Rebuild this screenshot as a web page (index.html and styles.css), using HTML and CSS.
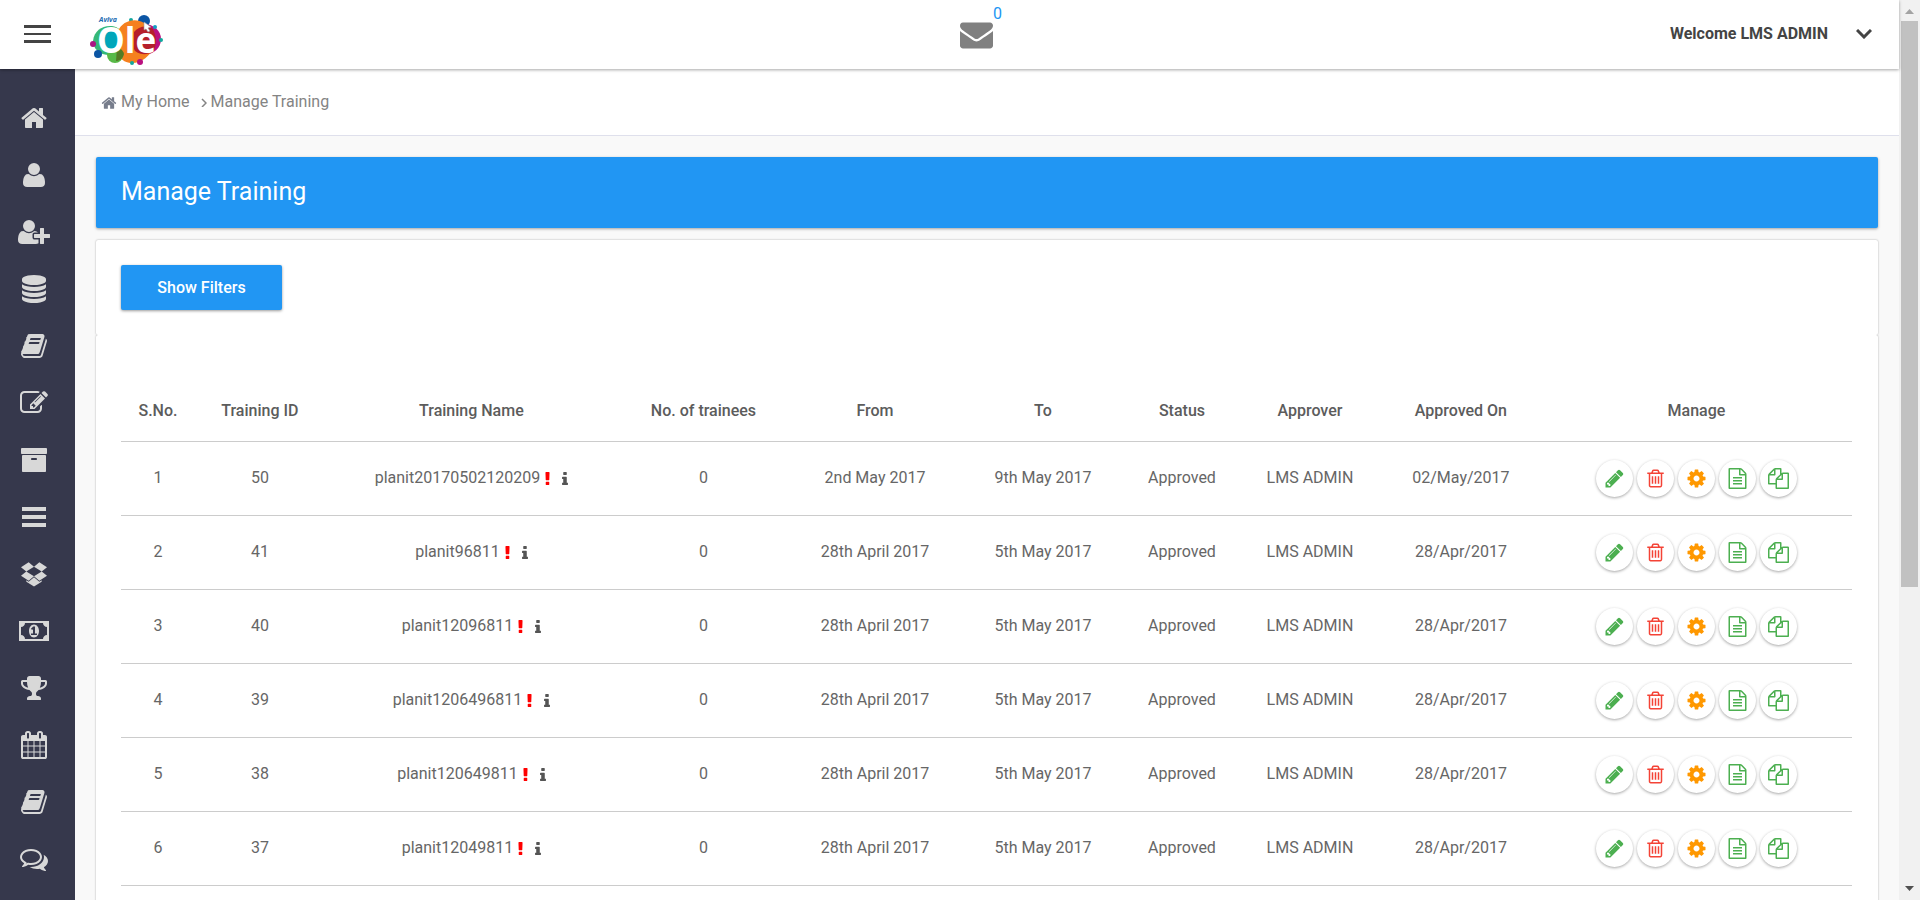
FILE: index.html
```html
<!DOCTYPE html>
<html lang="en">
<head>
<meta charset="utf-8">
<title>Manage Training</title>
<link rel="stylesheet" href="styles.css">
</head>
<body>
<svg class="sprite" aria-hidden="true">
  <symbol id="home" viewBox="0 0 1792 1792"><path d="M1472 992v480q0 26-19 45t-45 19h-384v-384h-256v384h-384q-26 0-45-19t-19-45v-480q0-1 .5-3t.5-3l575-474 575 474q1 2 1 6zm223-69l-62 74q-8 9-21 11h-3q-13 0-21-7l-692-577-692 577q-12 8-24 7-13-2-21-11l-62-74q-8-10-7-23.500t11-21.500l719-599q32-26 76-26t76 26l244 204v-195q0-14 9-23t23-9h192q14 0 23 9t9 23v408l219 182q10 8 11 21.500t-7 23.500z"/></symbol>
  <symbol id="user" viewBox="0 0 1792 1792"><path d="M1600 1405q0 120-73 189.500t-194 69.500h-874q-121 0-194-69.500t-73-189.500q0-53 3.500-103.500t14-109 26.500-108.500 43-97.500 62-81 85.500-53.500 111.500-20q9 0 42 21.500t74.500 48 108 48 133.500 21.500 133.500-21.500 108-48 74.500-48 42-21.500q61 0 111.500 20t85.500 53.500 62 81 43 97.500 26.500 108.500 14 109 3.500 103.500zm-320-893q0 159-112.500 271.500t-271.500 112.500-271.500-112.500-112.500-271.500 112.500-271.500 271.500-112.500 271.500 112.500 112.500 271.500z"/></symbol>
  <symbol id="user-plus" viewBox="0 0 2048 1792"><path d="M704 896q-159 0-271.500-112.500t-112.500-271.500 112.500-271.500 271.500-112.500 271.500 112.500 112.500 271.500-112.500 271.500-271.500 112.500zm960 128h352q13 0 22.500 9.500t9.500 22.500v192q0 13-9.500 22.500t-22.500 9.500h-352v352q0 13-9.500 22.500t-22.500 9.500h-192q-13 0-22.500-9.500t-9.500-22.500v-352h-352q-13 0-22.500-9.500t-9.500-22.500v-192q0-13 9.500-22.500t22.500-9.500h352v-352q0-13 9.500-22.500t22.500-9.500h192q13 0 22.500 9.500t9.500 22.500v352zm-736 224q0 52 38 90t90 38h256v238q-68 50-171 50h-874q-121 0-194-69t-73-190q0-53 3.500-103.500t14-109 26.500-108.500 43-97.500 62-81 85.500-53.500 111.500-20q19 0 39 17 79 61 154.500 91.500t164.500 30.500 164.500-30.500 154.500-91.500q20-17 39-17 132 0 217 96h-223q-52 0-90 38t-38 90v192z"/></symbol>
  <symbol id="database" viewBox="0 0 1792 1792"><path d="M896 768q237 0 443-43t325-127v170q0 69-103 128t-280 93.500-385 34.500-385-34.500-280-93.500-103-128v-170q119 84 325 127t443 43zm0 768q237 0 443-43t325-127v170q0 69-103 128t-280 93.500-385 34.500-385-34.500-280-93.500-103-128v-170q119 84 325 127t443 43zm0-384q237 0 443-43t325-127v170q0 69-103 128t-280 93.500-385 34.500-385-34.500-280-93.500-103-128v-170q119 84 325 127t443 43zm0-1152q208 0 385 34.500t280 93.500 103 128v128q0 69-103 128t-280 93.500-385 34.500-385-34.500-280-93.500-103-128v-128q0-69 103-128t280-93.500 385-34.500z"/></symbol>
  <symbol id="book" viewBox="0 0 1792 1792"><path d="M1703 478q40 57 18 129l-275 906q-19 64-76.500 107.500t-122.500 43.500h-923q-77 0-148.500-53.500t-99.500-131.500q-24-67-2-127 0-4 3-27t4-37q1-8-3-21.500t-3-19.500q2-11 8-21t16.500-23.500 16.500-23.500q23-38 45-91.500t30-91.500q3-10 .5-30t-.5-28q3-11 17-28t17-23q21-36 42-92t25-90q1-9-2.500-32t.5-28q4-13 22-30.500t22-22.500q19-26 42.500-84.500t27.500-96.500q1-8-3-25.500t-2-26.500q2-8 9-18t18-23 17-21q8-12 16.500-30.500t15-35 16-36 19.500-32 26.500-23.500 36-11.500 47.500 5.500l-1 3q38-9 51-9h761q74 0 114 56t18 130l-274 906q-36 119-71.500 153.500t-128.500 34.500h-869q-27 0-38 15-11 16-1 43 24 70 144 70h923q29 0 56-15.500t35-41.500l300-987q7-22 5-57 38 15 59 43zm-1064 2q-4 13 2 22.500t20 9.500h608q13 0 25.500-9.500t16.500-22.500l21-64q4-13-2-22.500t-20-9.500h-608q-13 0-25.500 9.500t-16.500 22.500zm-83 256q-4 13 2 22.500t20 9.500h608q13 0 25.500-9.500t16.500-22.500l21-64q4-13-2-22.500t-20-9.500h-608q-13 0-25.500 9.500t-16.500 22.500z"/></symbol>
  <symbol id="edit" viewBox="0 0 1792 1792"><path d="M888 1184l116-116-152-152-116 116v56h96v96h56zm440-720q-16-16-33 1l-350 350q-17 17-1 33t33-1l350-350q17-17 1-33zm80 594v190q0 119-84.500 203.500t-203.500 84.500h-832q-119 0-203.500-84.500t-84.500-203.500v-832q0-119 84.500-203.500t203.500-84.500h832q63 0 117 25 15 7 18 23 3 17-9 29l-49 49q-14 14-32 8-23-6-45-6h-832q-66 0-113 47t-47 113v832q0 66 47 113t113 47h832q66 0 113-47t47-113v-126q0-13 9-22l64-64q15-15 35-7t20 29zm-96-738l288 288-672 672h-288v-288zm444 132l-92 92-288-288 92-92q28-28 68-28t68 28l152 152q28 28 28 68t-28 68z"/></symbol>
  <symbol id="archive" viewBox="0 0 1792 1792"><path d="M1088 832q0-26-19-45t-45-19h-256q-26 0-45 19t-19 45 19 45 45 19h256q26 0 45-19t19-45zm576-192v960q0 26-19 45t-45 19h-1408q-26 0-45-19t-19-45v-960q0-26 19-45t45-19h1408q26 0 45 19t19 45zm64-448v256q0 26-19 45t-45 19h-1536q-26 0-45-19t-19-45v-256q0-26 19-45t45-19h1536q26 0 45 19t19 45z"/></symbol>
  <symbol id="bars" viewBox="0 0 1792 1792"><path d="M128 256h1536v256H128zM128 768h1536v256H128zM128 1280h1536v256H128z"/></symbol>
  <symbol id="dropbox" viewBox="0 0 1792 1792"><path d="M402 733l494 305-342 285-490-319zM1390 733l338 271-490 319-342-285zM554 143l342 285-494 305-338-270zM1238 143l490 320-338 270-494-305zM896 1100l343 284 147-96v108l-490 293-490-293v-108l147 96z"/></symbol>
  <symbol id="money" viewBox="0 0 1920 1792"><path fill-rule="evenodd" d="M0 256h1920v1280H0zM384 384q0 106-75 181t-181 75v512q106 0 181 75t75 181h1152q0-106 75-181t181-75V640q-106 0-181-75t-75-181zM960 480c180 0 320 186 320 416s-140 416-320 416-320-186-320-416 140-416 320-416zM768 1152h384v-96h-128V608H910L763 744l77 80q42-37 55-57h1v289H768z"/></symbol>
  <symbol id="trophy" viewBox="0 0 1792 1792"><path d="M522 883q-74-162-74-371h-256v96q0 78 94.500 162t235.500 113zm1078-275v-96h-256q0 209-74 371 141-29 235.500-113t94.500-162zm128-128v128q0 71-41.500 143t-112 130-173 97.500-215.500 44.500q-42 54-95 95-38 34-52.500 72.500t-14.500 89.500q0 54 30.500 91t97.500 37q75 0 133.500 45.500t58.500 114.500v64q0 14-9 23t-23 9h-832q-14 0-23-9t-9-23v-64q0-69 58.500-114.500t133.500-45.500q67 0 97.500-37t30.500-91q0-51-14.500-89.500t-52.500-72.500q-53-41-95-95-113-5-215.500-44.500t-173-97.500-112-130-41.500-143v-128q0-40 28-68t68-28h288v-96q0-66 47-113t113-47h576q66 0 113 47t47 113v96h288q40 0 68 28t28 68z"/></symbol>
  <symbol id="calendar" viewBox="0 0 1792 1792"><path d="M192 1664h288v-288h-288v288zm352 0h320v-288h-320v288zm-352-352h288v-320h-288v320zm352 0h320v-320h-320v320zm-352-384h288v-288h-288v288zm736 736h320v-288h-320v288zm-384-736h320v-288h-320v288zm768 736h288v-288h-288v288zm-384-352h320v-320h-320v320zm-352-864v-288q0-13-9.500-22.500t-22.500-9.500h-64q-13 0-22.500 9.500t-9.500 22.500v288q0 13 9.500 22.500t22.500 9.500h64q13 0 22.500-9.500t9.500-22.500zm736 864h288v-320h-288v320zm-384-384h320v-288h-320v288zm384 0h288v-288h-288v288zm32-480v-288q0-13-9.500-22.500t-22.500-9.500h-64q-13 0-22.500 9.500t-9.500 22.500v288q0 13 9.500 22.500t22.500 9.500h64q13 0 22.500-9.500t9.500-22.500zm384-64v1280q0 52-38 90t-90 38h-1408q-52 0-90-38t-38-90v-1280q0-52 38-90t90-38h128v-96q0-66 47-113t113-47h64q66 0 113 47t47 113v96h384v-96q0-66 47-113t113-47h64q66 0 113 47t47 113v96h128q52 0 90 38t38 90z"/></symbol>
  <symbol id="comments" viewBox="0 0 1792 1792"><path d="M704 384q-153 0-286 52t-211.500 141-78.500 191q0 82 53 158t149 132l97 56-35 84q34-20 62-39l44-31 53 10q78 14 153 14 153 0 286-52t211.500-141 78.500-191-78.500-191-211.500-141-286-52zm0-128q191 0 353.500 68.500t256.500 186.500 94 257-94 257-256.500 186.500-353.500 68.500q-86 0-176-16-124 88-278 128-36 9-86 16h-3q-11 0-20.500-8t-11.500-21q-1-3-1-6.500t.5-6.500 2-6l2.500-5 3.500-5.500 4-5 4.500-5 4-4.500q5-6 23-25t26-29.500 22.500-29 25-38.500 20.500-44q-124-72-195-177t-71-224q0-139 94-257t256.500-186.500 353.500-68.500zm822 1169q10 24 20.500 44t25 38.500 22.500 29 26 29.500 23 25q1 1 4 4.500t4.500 5 4 5 3.500 5.500l2.500 5 2 6 .5 6.500-1 6.500q-3 14-13 22t-22 7q-50-7-86-16-154-40-278-128-90 16-176 16-271 0-472-132 58 4 88 4 161 0 309-45t264-129q125-92 192-212t67-254q0-77-23-152 129 71 204 178t75 230q0 120-71 224.500t-195 176.500z"/></symbol>
  <symbol id="envelope" viewBox="0 256 1792 1408"><path d="M1792 710v794q0 66-47 113t-113 47h-1472q-66 0-113-47t-47-113v-794q44 49 101 87 362 246 497 345 57 42 92.500 65.500t94.500 48 110 24.500h2q51 0 110-24.500t94.500-48 92.500-65.500q170-123 498-345 57-39 100-87zm0-294q0 79-49 151t-122 123q-376 261-468 325-10 7-42.500 31t-54 38.500-52 32.500-57.500 27-50 9h-2q-23 0-50-9t-57.500-27-52-32.500-54-38.500-42.500-31q-91-64-262-182.500t-205-142.500q-62-42-117-115.500t-55-136.500q0-78 41.500-130t118.500-52h1472q65 0 112.500 47t47.500 113z"/></symbol>
  <symbol id="pencil" viewBox="0 0 1792 1792"><path d="M491 1536l91-91-235-235-91 91v107h128v128h107zm523-928q0-22-22-22-10 0-17 7l-542 542q-7 7-7 17 0 22 22 22 10 0 17-7l542-542q7-7 7-17zm-54-192l416 416-832 832h-416v-416zm683 96q0 53-37 90l-166 166-416-416 166-165q36-38 90-38 53 0 91 38l235 234q37 39 37 91z"/></symbol>
  <symbol id="trash" viewBox="0 0 1792 1792"><path d="M704 736v576q0 14-9 23t-23 9h-64q-14 0-23-9t-9-23v-576q0-14 9-23t23-9h64q14 0 23 9t9 23zm256 0v576q0 14-9 23t-23 9h-64q-14 0-23-9t-9-23v-576q0-14 9-23t23-9h64q14 0 23 9t9 23zm256 0v576q0 14-9 23t-23 9h-64q-14 0-23-9t-9-23v-576q0-14 9-23t23-9h64q14 0 23 9t9 23zm128 724v-948h-896v948q0 22 7 40.500t14.500 27 10.500 8.500h832q3 0 10.500-8.500t14.500-27 7-40.500zm-672-1076h448l-48-117q-7-9-17-11h-317q-10 2-17 11zm928 32v64q0 14-9 23t-23 9h-96v948q0 83-47 143.500t-113 60.500h-832q-66 0-113-58.500t-47-141.500v-952h-96q-14 0-23-9t-9-23v-64q0-14 9-23t23-9h309l70-167q15-37 54-63t79-26h320q40 0 79 26t54 63l70 167h309q14 0 23 9t9 23z"/></symbol>
  <symbol id="cog" viewBox="0 0 1792 1792"><path d="M1152 896q0-106-75-181t-181-75-181 75-75 181 75 181 181 75 181-75 75-181zm512-109v222q0 12-8 23t-20 13l-185 28q-19 54-39 91 35 50 107 138 10 12 10 25t-9 23q-27 37-99 108t-94 71q-12 0-26-9l-138-108q-44 23-91 38-16 136-29 186-7 28-36 28h-222q-14 0-24.500-8.500t-11.500-21.500l-28-184q-49-16-90-37l-141 107q-10 9-25 9-14 0-25-11-126-114-165-168-7-10-7-23 0-12 8-23 15-21 51-66.500t54-70.500q-27-50-41-99l-183-27q-13-2-21-12.500t-8-23.500v-222q0-12 8-23t19-13l186-28q14-46 39-92-40-57-107-138-10-12-10-24 0-10 9-23 26-36 98.500-107.500t94.500-71.500q13 0 26 10l138 107q44-23 91-38 16-136 29-186 7-28 36-28h222q14 0 24.500 8.500t11.500 21.500l28 184q49 16 90 37l142-107q9-9 24-9 13 0 25 10 129 119 165 170 7 8 7 22 0 12-8 23-15 21-51 66.500t-54 70.500q26 50 41 98l183 28q13 2 21 12.500t8 23.500z"/></symbol>
  <symbol id="file" viewBox="0 0 1792 1792"><path d="M1596 380q28 28 48 76t20 88v1152q0 40-28 68t-68 28h-1344q-40 0-68-28t-28-68v-1600q0-40 28-68t68-28h896q40 0 88 20t76 48zm-444-244v376h376q-10-29-22-41l-313-313q-12-12-41-22zm384 1528v-1024h-416q-40 0-68-28t-28-68v-416h-768v1536h1280zm-1024-864q0-14 9-23t23-9h704q14 0 23 9t9 23v64q0 14-9 23t-23 9h-704q-14 0-23-9t-9-23v-64zm736 224q14 0 23 9t9 23v64q0 14-9 23t-23 9h-704q-14 0-23-9t-9-23v-64q0-14 9-23t23-9h704zm0 256q14 0 23 9t9 23v64q0 14-9 23t-23 9h-704q-14 0-23-9t-9-23v-64q0-14 9-23t23-9h704z"/></symbol>
  <symbol id="files" viewBox="0 0 1792 1792"><path d="M1696 384q40 0 68 28t28 68v1216q0 40-28 68t-68 28h-960q-40 0-68-28t-28-68v-288h-544q-40 0-68-28t-28-68v-672q0-40 20-88t48-76l408-408q28-28 76-48t88-20h416q40 0 68 28t28 68v328q68-40 128-40h416zm-544 213l-299 299h299v-299zm-640-384l-299 299h299v-299zm196 647l316-316v-416h-384v416q0 40-28 68t-68 28h-416v640h512v-256q0-40 20-88t48-76zm956 804v-1152h-384v416q0 40-28 68t-68 28h-416v640h896z"/></symbol>
  <symbol id="info" viewBox="576 128 640 1408"><path d="M1216 1344v128q0 26-19 45t-45 19h-512q-26 0-45-19t-19-45v-128q0-26 19-45t45-19h64v-384h-64q-26 0-45-19t-19-45v-128q0-26 19-45t45-19h384q26 0 45 19t19 45v576h64q26 0 45 19t19 45zm-128-1152v192q0 26-19 45t-45 19h-256q-26 0-45-19t-19-45v-192q0-26 19-45t45-19h256q26 0 45 19t19 45z"/></symbol>
  <symbol id="alert" viewBox="640 128 512 1408"><path d="M1088 1248v224q0 26-19 45t-45 19h-256q-26 0-45-19t-19-45v-224q0-26 19-45t45-19h256q26 0 45 19t19 45zm30-1056l-28 768q-1 26-20.500 45t-45.500 19h-256q-26 0-45.500-19t-20.500-45l-28-768q-1-26 17.500-45t44.500-19h320q26 0 44.500 19t17.500 45z"/></symbol>
</svg>

<div class="window">
  <div class="app">
    <header class="topbar">
      <button class="menu-toggle" type="button" aria-label="Toggle menu">
        <svg class="menu-icon" viewBox="0 0 27 18"><path d="M0 0h27v3H0zM0 8h27v2H0zM0 15h27v3H0z"/></svg>
      </button>
      <a class="logo" href="#" aria-label="Aviva Ole">
        <svg class="logo-art" viewBox="0 0 73 50">
          <circle cx="54" cy="6" r="6" fill="#0b55a4"/>
          <circle cx="41" cy="5" r="2" fill="#12a79d"/>
          <path d="M3 26C4 15 13 10 22 11c6 1 12 5 12 14s-5 14-12 15C10 41 3 34 3 26z" fill="#35b878"/>
          <path d="M54 9c10 0 17 7 17 15 0 9-7 15-16 16z" fill="#b9107f"/>
          <path d="M28 16C32 6 45 2 54 8c9 4 13 14 10 24-4 9-13 17-24 16-8-1-14-8-13-16z" fill="#f5801f"/>
          <path d="M44 17c4-5 11-7 18-4 5 7 5 17 1 24-8 4-17 2-19-3z" fill="#b51f2b"/>
          <circle cx="25" cy="40" r="8" fill="#58b947"/>
          <path d="M27 33c3 0 6 2 7 6-1 5-5 7-8 7z" fill="#557b24"/>
          <circle cx="8" cy="39" r="4" fill="#0b55a4"/>
          <circle cx="3" cy="29" r="3" fill="#a91683"/>
          <circle cx="50" cy="47" r="3" fill="#b9107f"/>
          <circle cx="42" cy="48" r="2" fill="#12a79d"/>
          <circle cx="71" cy="25" r="2" fill="#12a79d"/>
          <circle cx="65" cy="12" r="2" fill="#159ec4"/>
          <ellipse cx="21" cy="25" rx="9" ry="12" fill="#00a6ba"/>
          <text class="logo-name" x="7" y="38">Ole</text>
          <path d="M54 7l7 5-3 1 2 3-2 1-2-3-2 1z" fill="#fff" stroke="#999" stroke-width=".6"/>
          <text class="logo-brand" x="9" y="7">Aviva</text>
        </svg>
      </a>
      <a class="mail" href="#" aria-label="Messages">
        <svg class="mail-icon"><use href="#envelope"/></svg>
        <span class="mail-count">0</span>
      </a>
      <button class="account" type="button">
        <span>Welcome LMS ADMIN</span>
        <svg class="chevron" viewBox="0 0 16 10"><path d="M1 1l7 7 7-7"/></svg>
      </button>
    </header>

    <div class="body">
      <nav class="sidebar" aria-label="Main">
        <a class="nav-item" href="#" aria-label="Home"><svg class="nav-icon"><use href="#home"/></svg></a>
        <a class="nav-item" href="#" aria-label="Profile"><svg class="nav-icon"><use href="#user"/></svg></a>
        <a class="nav-item" href="#" aria-label="Add user"><svg class="nav-icon"><use href="#user-plus"/></svg></a>
        <a class="nav-item" href="#" aria-label="Data"><svg class="nav-icon"><use href="#database"/></svg></a>
        <a class="nav-item" href="#" aria-label="Courses"><svg class="nav-icon"><use href="#book"/></svg></a>
        <a class="nav-item" href="#" aria-label="Assessments"><svg class="nav-icon"><use href="#edit"/></svg></a>
        <a class="nav-item" href="#" aria-label="Archive"><svg class="nav-icon"><use href="#archive"/></svg></a>
        <a class="nav-item" href="#" aria-label="Lists"><svg class="nav-icon"><use href="#bars"/></svg></a>
        <a class="nav-item" href="#" aria-label="Files"><svg class="nav-icon"><use href="#dropbox"/></svg></a>
        <a class="nav-item" href="#" aria-label="Budget"><svg class="nav-icon"><use href="#money"/></svg></a>
        <a class="nav-item" href="#" aria-label="Awards"><svg class="nav-icon"><use href="#trophy"/></svg></a>
        <a class="nav-item" href="#" aria-label="Calendar"><svg class="nav-icon"><use href="#calendar"/></svg></a>
        <a class="nav-item" href="#" aria-label="Library"><svg class="nav-icon"><use href="#book"/></svg></a>
        <a class="nav-item" href="#" aria-label="Forum"><svg class="nav-icon"><use href="#comments"/></svg></a>
      </nav>

      <main class="main">
        <nav class="breadcrumb" aria-label="Breadcrumb">
          <a class="crumb" href="#"><svg class="crumb-home"><use href="#home"/></svg>My Home</a>
          <svg class="crumb-sep" viewBox="0 0 6 10"><path d="M1 2l4 4-4 4"/></svg>
          <a class="crumb" href="#">Manage Training</a>
        </nav>

        <div class="content">
          <h1 class="title">Manage Training</h1>
          <section class="card filters">
            <button class="filter-button" type="button">Show Filters</button>
          </section>
          <section class="card listing">
            <table class="table">
              <colgroup>
                <col class="c-no"><col class="c-id"><col class="c-name"><col class="c-count"><col class="c-from"><col class="c-to"><col class="c-status"><col class="c-approver"><col class="c-date"><col class="c-manage">
              </colgroup>
              <thead>
                <tr><th>S.No.</th><th>Training ID</th><th>Training Name</th><th>No. of trainees</th><th>From</th><th>To</th><th>Status</th><th>Approver</th><th>Approved On</th><th>Manage</th></tr>
              </thead>
              <tbody>
                <tr><td>1</td><td>50</td><td>planit20170502120209<svg class="alert"><use href="#alert"/></svg><svg class="info"><use href="#info"/></svg></td><td>0</td><td>2nd May 2017</td><td>9th May 2017</td><td>Approved</td><td>LMS ADMIN</td><td>02/May/2017</td>
                  <td><div class="actions"><button class="action green" type="button" aria-label="Edit"><svg><use href="#pencil"/></svg></button><button class="action red" type="button" aria-label="Delete"><svg><use href="#trash"/></svg></button><button class="action orange" type="button" aria-label="Settings"><svg><use href="#cog"/></svg></button><button class="action green" type="button" aria-label="Report"><svg><use href="#file"/></svg></button><button class="action green" type="button" aria-label="Copy"><svg><use href="#files"/></svg></button></div></td></tr>
                <tr><td>2</td><td>41</td><td>planit96811<svg class="alert"><use href="#alert"/></svg><svg class="info"><use href="#info"/></svg></td><td>0</td><td>28th April 2017</td><td>5th May 2017</td><td>Approved</td><td>LMS ADMIN</td><td>28/Apr/2017</td>
                  <td><div class="actions"><button class="action green" type="button" aria-label="Edit"><svg><use href="#pencil"/></svg></button><button class="action red" type="button" aria-label="Delete"><svg><use href="#trash"/></svg></button><button class="action orange" type="button" aria-label="Settings"><svg><use href="#cog"/></svg></button><button class="action green" type="button" aria-label="Report"><svg><use href="#file"/></svg></button><button class="action green" type="button" aria-label="Copy"><svg><use href="#files"/></svg></button></div></td></tr>
                <tr><td>3</td><td>40</td><td>planit12096811<svg class="alert"><use href="#alert"/></svg><svg class="info"><use href="#info"/></svg></td><td>0</td><td>28th April 2017</td><td>5th May 2017</td><td>Approved</td><td>LMS ADMIN</td><td>28/Apr/2017</td>
                  <td><div class="actions"><button class="action green" type="button" aria-label="Edit"><svg><use href="#pencil"/></svg></button><button class="action red" type="button" aria-label="Delete"><svg><use href="#trash"/></svg></button><button class="action orange" type="button" aria-label="Settings"><svg><use href="#cog"/></svg></button><button class="action green" type="button" aria-label="Report"><svg><use href="#file"/></svg></button><button class="action green" type="button" aria-label="Copy"><svg><use href="#files"/></svg></button></div></td></tr>
                <tr><td>4</td><td>39</td><td>planit1206496811<svg class="alert"><use href="#alert"/></svg><svg class="info"><use href="#info"/></svg></td><td>0</td><td>28th April 2017</td><td>5th May 2017</td><td>Approved</td><td>LMS ADMIN</td><td>28/Apr/2017</td>
                  <td><div class="actions"><button class="action green" type="button" aria-label="Edit"><svg><use href="#pencil"/></svg></button><button class="action red" type="button" aria-label="Delete"><svg><use href="#trash"/></svg></button><button class="action orange" type="button" aria-label="Settings"><svg><use href="#cog"/></svg></button><button class="action green" type="button" aria-label="Report"><svg><use href="#file"/></svg></button><button class="action green" type="button" aria-label="Copy"><svg><use href="#files"/></svg></button></div></td></tr>
                <tr><td>5</td><td>38</td><td>planit120649811<svg class="alert"><use href="#alert"/></svg><svg class="info"><use href="#info"/></svg></td><td>0</td><td>28th April 2017</td><td>5th May 2017</td><td>Approved</td><td>LMS ADMIN</td><td>28/Apr/2017</td>
                  <td><div class="actions"><button class="action green" type="button" aria-label="Edit"><svg><use href="#pencil"/></svg></button><button class="action red" type="button" aria-label="Delete"><svg><use href="#trash"/></svg></button><button class="action orange" type="button" aria-label="Settings"><svg><use href="#cog"/></svg></button><button class="action green" type="button" aria-label="Report"><svg><use href="#file"/></svg></button><button class="action green" type="button" aria-label="Copy"><svg><use href="#files"/></svg></button></div></td></tr>
                <tr><td>6</td><td>37</td><td>planit12049811<svg class="alert"><use href="#alert"/></svg><svg class="info"><use href="#info"/></svg></td><td>0</td><td>28th April 2017</td><td>5th May 2017</td><td>Approved</td><td>LMS ADMIN</td><td>28/Apr/2017</td>
                  <td><div class="actions"><button class="action green" type="button" aria-label="Edit"><svg><use href="#pencil"/></svg></button><button class="action red" type="button" aria-label="Delete"><svg><use href="#trash"/></svg></button><button class="action orange" type="button" aria-label="Settings"><svg><use href="#cog"/></svg></button><button class="action green" type="button" aria-label="Report"><svg><use href="#file"/></svg></button><button class="action green" type="button" aria-label="Copy"><svg><use href="#files"/></svg></button></div></td></tr>
              </tbody>
            </table>
          </section>
        </div>
      </main>
    </div>
  </div>

  <div class="scrollbar" aria-hidden="true">
    <svg class="scroll-arrow up" viewBox="0 0 9 5"><path d="M0 5l4.500-5L9 5z"/></svg>
    <div class="scroll-track"><div class="scroll-thumb"></div></div>
    <svg class="scroll-arrow down" viewBox="0 0 9 5"><path d="M0 0l4.500 5L9 0z"/></svg>
  </div>
</div>
</body>
</html>
```

FILE: styles.css
```css
* { box-sizing: border-box; }

body {
  margin: 0;
  background: #fff;
  color: #666;
  font: 16px/24px Roboto, "Liberation Sans", sans-serif;
}

button { font: inherit; color: inherit; border: 0; padding: 0; background: none; cursor: pointer; }
a { color: inherit; text-decoration: none; }
svg { display: block; fill: currentColor; }
.sprite { display: none; }

.window { display: flex; height: 100vh; overflow: hidden; }
.app { flex: 1; min-width: 0; display: flex; flex-direction: column; }

/* Top bar */
.topbar {
  flex: none;
  z-index: 1;
  display: grid;
  grid-template-columns: 66px 1fr auto 1fr;
  height: 69px;
  padding: 0 27px 0 24px;
  background: #fff;
  color: #444;
  box-shadow: 0 1px 3px rgba(0, 0, 0, .35);
}
.menu-toggle { justify-self: start; align-self: center; padding-bottom: 1px; }
.menu-icon { width: 27px; height: 18px; }
.logo { justify-self: start; align-self: center; padding-top: 10px; }
.logo-art { width: 73px; height: 50px; overflow: visible; }
.logo-name { font: 700 35px "Open Sans", sans-serif; fill: #fff; }
.logo-brand { font: italic 700 7px "Open Sans", sans-serif; fill: #1b6cb3; }
.mail { display: flex; color: #808080; }
.mail-icon { width: 33px; height: 27px; margin-top: 22px; }
.mail-count { padding-top: 2px; color: #2196f3; }
.account {
  justify-self: end;
  align-self: center;
  display: flex;
  align-items: center;
  gap: 28px;
  padding-bottom: 2px;
  font-weight: 700;
}
.chevron { width: 16px; height: 10px; fill: none; stroke: currentColor; stroke-width: 3; }

/* Sidebar */
.body { flex: 1; min-height: 0; display: flex; }
.sidebar {
  flex: none;
  width: 75px;
  padding: 20px 7px 0 0;
  background: #36384c;
  color: #d8d8d8;
}
.nav-item { display: flex; align-items: center; justify-content: center; height: 57px; }
.nav-icon { width: 32px; height: 28px; }

/* Content */
.main { flex: 1; min-width: 0; background: #f9f9f9; }
.breadcrumb {
  display: flex;
  align-items: center;
  height: 67px;
  padding: 0 26px;
  gap: 11px;
  background: #fff;
  border-bottom: 1px solid #dfe0ec;
  color: #848484;
}
.crumb { display: flex; align-items: center; gap: 4px; }
.crumb + .crumb-sep + .crumb { margin-left: -7px; }
.crumb-home { width: 16px; height: 18px; padding-top: 2px; color: #777d8c; }
.crumb-sep { width: 6px; height: 10px; fill: none; stroke: currentColor; stroke-width: 1.5; }
.content { padding: 21px 21px 0; }
.title {
  margin: 0 0 12px;
  padding: 20px 25px 21px;
  font-size: 25px;
  line-height: 30px;
  font-weight: 400;
  color: #fff;
  background: #2196f3;
  border-radius: 2px;
  box-shadow: 0 1px 3px rgba(0, 0, 0, .35);
}
.card {
  background: #fff;
  border-radius: 2px;
  box-shadow: 0 0 2px rgba(0, 0, 0, .35);
}
.filters { padding: 25px; }
.filter-button {
  min-width: 161px;
  height: 45px;
  padding: 0 33px;
  color: #fff;
  font-weight: 500;
  background: #2196f3;
  border-radius: 2px;
  box-shadow: 0 1px 3px rgba(0, 0, 0, .4);
}
.listing { padding: 46px 26px 200px 25px; clip-path: inset(0 -4px -4px -4px); }

.table { width: 100%; table-layout: fixed; border-collapse: collapse; text-align: center; }
.table th { height: 60px; padding: 0; color: #5c5c5c; font-weight: 500; border-bottom: 1px solid #ccc; }
.table td { height: 74px; padding: 0; border-bottom: 1px solid #ccc; white-space: nowrap; }
.c-no { width: 4.27%; }
.c-id { width: 7.51%; }
.c-name { width: 16.93%; }
.c-count { width: 9.88%; }
.c-from { width: 9.94%; }
.c-to { width: 9.47%; }
.c-status { width: 6.59%; }
.c-approver { width: 8.2%; }
.c-date { width: 9.24%; }
.c-manage { width: 17.97%; }

.alert, .info { display: inline-block; height: 13px; vertical-align: -2px; }
.alert { width: 5px; margin-left: 5px; color: #f00; }
.info { width: 6px; margin-left: 12px; color: #555; }

.actions { display: flex; justify-content: center; gap: 4px; }
.action {
  display: grid;
  place-items: center;
  width: 37px;
  height: 37px;
  border-radius: 50%;
  background: #fff;
  box-shadow: 0 1px 3px rgba(0, 0, 0, .35);
}
.action svg { width: 21px; height: 21px; }
.green { color: #4caf50; }
.red { color: #f44336; }
.orange { color: #ff9800; }

/* Scrollbar */
.scrollbar {
  flex: none;
  display: flex;
  flex-direction: column;
  width: 21px;
  padding: 9px 2px;
  background: #f1f1f1;
}
.scroll-arrow { width: 9px; height: 5px; margin: 0 auto; }
.up { color: #a3a3a3; }
.down { color: #505050; }
.scroll-track { flex: 1; padding: 7px 0; }
.scroll-thumb { height: 66%; background: #c1c1c1; }
```
